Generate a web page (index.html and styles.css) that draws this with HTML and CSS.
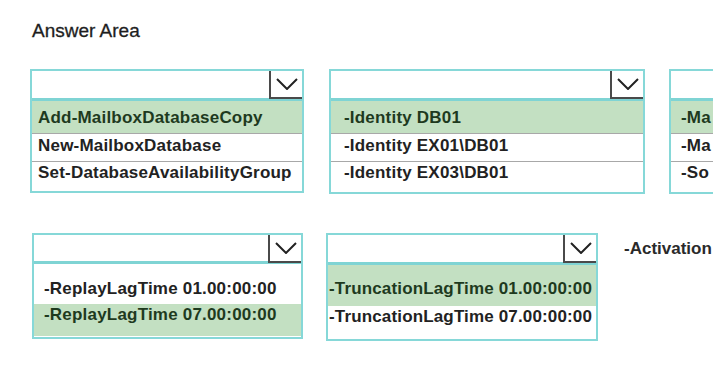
FILE: index.html
```html
<!DOCTYPE html>
<html lang="en">
<head>
    <meta charset="UTF-8">
    <title>Answer Area</title>
    <link rel="stylesheet" href="styles.css">
</head>
<body>
    <h1 class="title">Answer Area</h1>

    <div class="row row-top">
        <div class="box box-cmd">
            <div class="head"><span class="arrow"><svg viewBox="0 0 22 12" width="22" height="12"><path d="M1 1 L11 11 L21 1" fill="none" stroke="#222" stroke-width="2"/></svg></span></div>
            <div class="opt sel">Add-MailboxDatabaseCopy</div>
            <div class="opt">New-MailboxDatabase</div>
            <div class="opt last">Set-DatabaseAvailabilityGroup</div>
        </div>

        <div class="box box-id">
            <div class="head"><span class="arrow"><svg viewBox="0 0 22 12" width="22" height="12"><path d="M1 1 L11 11 L21 1" fill="none" stroke="#222" stroke-width="2"/></svg></span></div>
            <div class="opt sel">-Identity DB01</div>
            <div class="opt">-Identity EX01\DB01</div>
            <div class="opt last">-Identity EX03\DB01</div>
        </div>

        <div class="box box-cut">
            <div class="head"></div>
            <div class="opt sel">-Ma</div>
            <div class="opt">-Ma</div>
            <div class="opt last">-So</div>
        </div>
    </div>

    <div class="row row-bottom">
        <div class="box box-replay">
            <div class="head"><span class="arrow"><svg viewBox="0 0 22 12" width="22" height="12"><path d="M1 1 L11 11 L21 1" fill="none" stroke="#222" stroke-width="2"/></svg></span></div>
            <div class="opt tall">-ReplayLagTime 01.00:00:00</div>
            <div class="opt sel end">-ReplayLagTime 07.00:00:00</div>
        </div>

        <div class="box box-trunc">
            <div class="head"><span class="arrow"><svg viewBox="0 0 22 12" width="22" height="12"><path d="M1 1 L11 11 L21 1" fill="none" stroke="#222" stroke-width="2"/></svg></span></div>
            <div class="opt sel tall">-TruncationLagTime 01.00:00:00</div>
            <div class="opt end">-TruncationLagTime 07.00:00:00</div>
        </div>

        <div class="param">-Activation</div>
    </div>
</body>
</html>
```

FILE: styles.css
```css
body {
    margin: 0;
    width: 713px;
    height: 369px;
    overflow: hidden;
    background: #fff;
    font-family: "Liberation Sans", Arial, sans-serif;
    color: #222;
}
.title {
    margin: 0;
    padding: 20px 0 0 32px;
    font-size: 19px;
    font-weight: normal;
    color: #1e1e1e;
    line-height: 22px;
    -webkit-text-stroke: 0.3px #1e1e1e;
}
.row {
    display: flex;
    white-space: nowrap;
    overflow: hidden;
}
.row-top {
    margin-top: 27px;
}
.row-bottom {
    margin-top: 39px;
    align-items: flex-start;
}
.box {
    border: 2px solid #86d8d8;
    box-sizing: border-box;
    background: #fff;
    overflow: hidden;
    flex-shrink: 0;
}
.head {
    height: 27px;
    border-bottom: 3px solid #7fd4d4;
    display: flex;
    justify-content: flex-end;
}
.arrow {
    width: 31px;
    height: 26px;
    margin-top: -2px;
    margin-right: -2px;
    border: 2px solid #4a4a4a;
    display: flex;
    align-items: center;
    justify-content: center;
    background: #fff;
}
.opt {
    font-size: 17px;
    font-weight: bold;
    letter-spacing: 0.2px;
    height: 27px;
    line-height: 24px;
    border-top: 1px solid #a8a8a8;
    padding-left: 6px;
}
.head + .opt {
    border-top: none;
}
.opt.sel {
    background: #c3e0c2;
    color: #1e3a1e;
    height: 32px;
    line-height: 34px;
}
.opt.last {
    height: 34px;
    line-height: 22px;
}

.box-cmd {
    width: 274px;
    height: 124px;
    margin-left: 30px;
}
.box-id {
    width: 316px;
    height: 125px;
    margin-left: 25px;
}
.box-id .opt {
    padding-left: 13px;
}
.box-cut {
    width: 80px;
    height: 125px;
    margin-left: 24px;
}
.box-cut .opt {
    padding-left: 10px;
}

.box-replay {
    width: 271px;
    height: 106px;
    margin-left: 32px;
}
.box-replay .head {
    height: 26px;
}
.box-replay .opt {
    padding-left: 10px;
    border-top: none;
}
.box-replay .opt.tall {
    height: 40px;
    line-height: 20px;
    display: flex;
    align-items: flex-end;
    padding-bottom: 5px;
    box-sizing: border-box;
}
.box-replay .opt.end {
    height: 32px;
    line-height: 22px;
}

.box-trunc {
    width: 272px;
    height: 108px;
    margin-left: 23px;
}
.box-trunc .head {
    height: 27px;
}
.box-trunc .opt {
    padding-left: 1px;
    letter-spacing: 0.15px;
}
.box-trunc .opt.tall {
    height: 41px;
    display: flex;
    align-items: flex-end;
    padding-bottom: 7px;
    box-sizing: border-box;
    line-height: 20px;
}
.box-trunc .opt.end {
    border-top: none;
    line-height: 22px;
    height: 34px;
}
.param {
    margin-left: 26px;
    margin-top: 6px;
    font-size: 17px;
    font-weight: bold;
    color: #2a2a2a;
}
```
